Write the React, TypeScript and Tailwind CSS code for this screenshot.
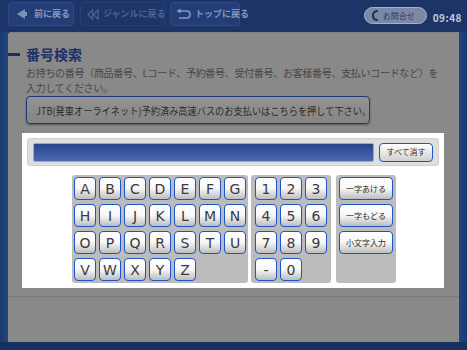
import React from "react";

const font = { fontFamily: '"Noto Sans CJK JP", "Noto Sans", sans-serif' };

function Key({ label, wide }: { label: string; wide?: boolean }) {
  return (
    <div
      className={
        (wide ? "w-[54px] text-[8px] text-[#2a2a2a]" : "w-[22px] text-[14px] text-[#3a3a3a]") +
        " h-[23px] rounded-[4px] border-[1.5px] border-[#1b55c9] bg-linear-to-b from-white via-[#f7f7f7] to-[#bdbdbd] flex items-center justify-center leading-none"
      }
      style={wide ? font : { fontFamily: '"DejaVu Sans", sans-serif' }}
    >
      {label}
    </div>
  );
}

function Empty({ wide }: { wide?: boolean }) {
  return <div className={(wide ? "w-[54px]" : "w-[22px]") + " h-[23px]"} />;
}

export default function App() {
  const letters = "ABCDEFGHIJKLMNOPQRSTUVWXYZ".split("");
  const nums = ["1", "2", "3", "4", "5", "6", "7", "8", "9", "-", "0"];
  return (
    <div className="w-[467px] h-[350px] bg-[#17305f] overflow-hidden flex flex-col" style={font}>
      {/* top bar */}
      <div className="h-[32px] flex items-start pt-[2px] pl-[8px] pr-[5px] bg-[#1c3566]">
        <div className="w-[66px] h-[24px] rounded-[3px] bg-[#233e76] border border-[#2e4a86] flex items-center gap-[6px] pl-[7px]">
          <svg width="12" height="12" viewBox="0 0 12 12">
            <path d="M1 6 L9 1 L9 4 L11 4 L11 8 L9 8 L9 11 Z" fill="#7d8fb8" />
          </svg>
          <span className="text-[9px] font-bold text-[#8798bf] whitespace-nowrap">前に戻る</span>
        </div>
        <div className="ml-[6px] w-[85px] h-[24px] rounded-[3px] bg-[#1e3566] border border-[#24407a] flex items-center gap-[3px] pl-[6px]">
          <svg width="13" height="11" viewBox="0 0 14 12" className="shrink-0">
            <path d="M1 6 L6 1 L6 11 Z M7 6 L12 1 L12 11 Z" fill="none" stroke="#465f93" strokeWidth="1.5" />
          </svg>
          <span className="text-[9px] font-bold text-[#4b6397] whitespace-nowrap">ジャンルに戻る</span>
        </div>
        <div className="ml-[5px] w-[70px] h-[24px] rounded-[3px] bg-[#233e76] border border-[#2e4a86] flex items-center gap-[4px] pl-[5px]">
          <svg width="15" height="12" viewBox="0 0 15 12" className="shrink-0">
            <path d="M3 3 L11 3 Q14 3 14 6.5 Q14 10 11 10 L3 10" fill="none" stroke="#8798bf" strokeWidth="1.6" />
            <path d="M0.5 3 L4.5 0.5 L4.5 5.5 Z" fill="#8798bf" />
          </svg>
          <span className="text-[9px] font-bold text-[#8798bf] whitespace-nowrap">トップに戻る</span>
        </div>
        <div className="flex-1" />
        <div className="mt-[5px] w-[63px] h-[17px] rounded-full bg-[#7c89a6] border border-[#a6b1c8] flex items-center gap-[4px] pl-[7px]">
          <svg width="7" height="11" viewBox="0 0 7 11">
            <path d="M5 1 Q1 1.5 1 5.5 Q1 9.5 5 10" fill="none" stroke="#1c2c58" strokeWidth="2" strokeLinecap="round" />
          </svg>
          <span className="text-[8px] text-[#26345a]">お問合せ</span>
        </div>
        <span className="ml-[6px] mt-[8px] text-[10px] font-bold text-[#c4cbdc] tracking-[0.5px]">09:48</span>
      </div>

      {/* main panel */}
      <div className="flex h-[310px]">
        <div className="w-[8px] bg-linear-to-r from-[#1a3870] to-[#24457f]" />
        <div className="w-[451px] bg-[#898989] rounded-tl-[3px] flex flex-col border-t border-[#808080]">
          <div className="flex items-center mt-[12px] h-[18px]">
            <div className="w-[12px] h-[3px] bg-[#1b2f66]" />
            <span className="ml-[6px] text-[14px] font-bold text-[#1d3068] leading-none">番号検索</span>
          </div>
          <div className="ml-[18px] mt-[2px] text-[10px] leading-[15px] text-[#464646] tracking-[-0.3px] whitespace-nowrap">
            お持ちの番号（商品番号、Lコード、予約番号、受付番号、お客様番号、支払いコードなど）を
            <br />
            入力してください。
          </div>
          <div className="ml-[18px] mt-[1px] w-[344px] h-[28px] rounded-[4px] border-[1.5px] border-[#1d3a7a] bg-linear-to-b from-[#929292] to-[#858585] flex items-center pl-[9px] shadow-[0_1px_2px_#555] overflow-hidden">
            <span className="text-[10px] text-[#2b2b2b] whitespace-nowrap inline-block origin-left scale-x-[0.92]">
              JTB(発車オーライネット)予約済み高速バスのお支払いはこちらを押して下さい。
            </span>
          </div>

          {/* keyboard area */}
          <div className="ml-[14px] mt-[9px] w-[422px] h-[155px] bg-white flex flex-col p-[5px]">
            <div className="h-[28px] rounded-[3px] bg-[#dedede] border border-[#d0d0d0] flex items-center pl-[5px] gap-[5px]">
              <div className="w-[341px] h-[19px] rounded-[2px] bg-linear-to-b from-[#27448a] to-[#4d6bb5] border border-[#9aa6c4]" />
              <div className="w-[54px] h-[19px] rounded-[4px] border-[1.5px] border-[#1b55c9] bg-linear-to-b from-white to-[#d0d0d0] flex items-center justify-center text-[8px] text-[#2a2a2a]">
                すべて消す
              </div>
            </div>
            <div className="flex justify-center gap-[3px] mt-[9px] ml-[2px]">
              <div className="grid grid-cols-7 gap-x-[3px] gap-y-[4px] p-[2px] px-[2px] bg-[#bcbcbc] rounded-[3px]">
                {letters.map((l) => (
                  <Key key={l} label={l} />
                ))}
              </div>
              <div className="grid grid-cols-3 gap-x-[3px] gap-y-[4px] p-[2px] px-[4px] bg-[#bcbcbc] rounded-[3px]">
                {nums.map((l) => (
                  <Key key={l} label={l} />
                ))}
                <Empty />
              </div>
              <div className="ml-[2px] flex flex-col gap-[4px] p-[2px] px-[3px] bg-[#bcbcbc] rounded-[3px]">
                <Key wide label="一字あける" />
                <Key wide label="一字もどる" />
                <Key wide label="小文字入力" />
                <Empty wide />
              </div>
            </div>
          </div>

          <div className="mt-[8px] h-px bg-[#7a7a7a]" />
          <div className="flex-1" />
        </div>
        <div className="w-[8px] bg-linear-to-r from-[#24457f] to-[#1a3870]" />
      </div>
    </div>
  );
}
